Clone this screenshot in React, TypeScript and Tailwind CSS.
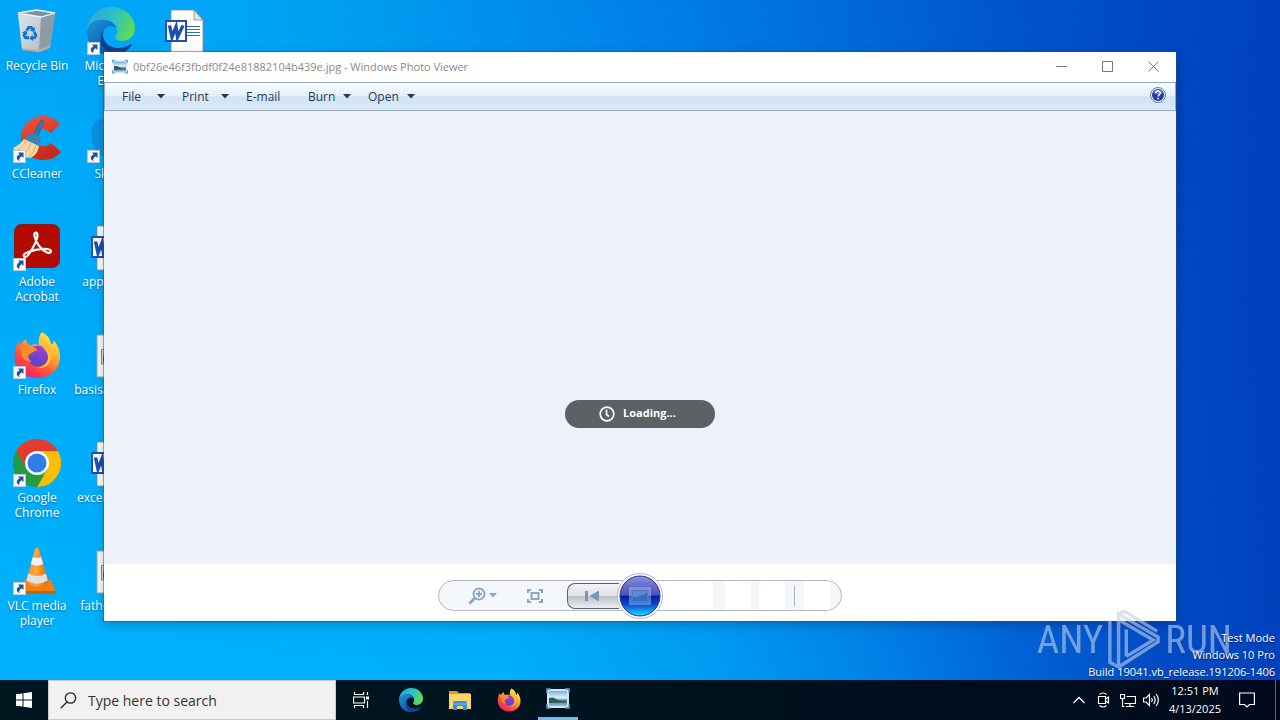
import type { ReactNode } from "react";

type IconProps = { className?: string };

const RecycleBinIcon = ({ className }: IconProps) => (
  <svg viewBox="0 0 48 48" className={className}>
    <defs>
      <linearGradient id="binFront" x1="0" y1="0" x2="1" y2="1">
        <stop offset="0" stopColor="#dde5ea" />
        <stop offset="1" stopColor="#b3bfc8" />
      </linearGradient>
    </defs>
    <path d="M5 6 L24 3 L42 6 L37 40 L26 45 L9 42Z" fill="#a9b8c3" />
    <path d="M5 6 L28 10 L26 45 L9 42Z" fill="url(#binFront)" />
    <path d="M28 10 L42 6 L37 40 L26 45Z" fill="#8d9ba6" />
    <path d="M5 6 L24 3 L42 6 L28 10Z" fill="#7d929f" stroke="#eef4f7" strokeWidth="1.3" />
    <path d="M9 41 L26 43 L37 38 L37 41 L26 45 L9 43Z" fill="#c9a99a" />
    <g fill="#1173cb">
      <path id="recycleArm" d="M12.500 22.500 L15 19 H19 L20.500 21 L22 20 L21.500 25 L16.800 23.500 L18.300 22.500 L17 21.300 L15 24.300Z" />
      <use href="#recycleArm" transform="rotate(120 17 26.500)" />
      <use href="#recycleArm" transform="rotate(240 17 26.500)" />
    </g>
  </svg>
);

const EdgeIcon = ({ className }: IconProps) => (
  <svg viewBox="0 0 48 48" className={className}>
    <defs>
      <linearGradient id="edgeTop" x1="0" y1="0.3" x2="1" y2="0.6">
        <stop offset="0" stopColor="#2aa9e0" />
        <stop offset="0.5" stopColor="#2cc0c8" />
        <stop offset="1" stopColor="#62dd4c" />
      </linearGradient>
      <linearGradient id="edgeMid" x1="0" y1="0" x2="0.6" y2="1">
        <stop offset="0" stopColor="#1c93dc" />
        <stop offset="1" stopColor="#0c59a8" />
      </linearGradient>
    </defs>
    <path d="M0 24 C0 10 11 0 24 0 C38 0 48 10 48 21 C48 29 42 34 35 34 C29 34 27 31 29 28 C32 24 30 15 20 13 C10 12 2 17 0 24Z" fill="url(#edgeTop)" />
    <path d="M0 24 C2 15 11 11 19 13 C24 14 28 17 29 21 C22 16 14 22 14 31 C14 39 19 45 27 47.8 C12 50 0 39 0 24Z" fill="url(#edgeMid)" />
    <path d="M17 22 C13 31 20 42 33 41 C38 40.500 41 39 44 37 C45 37 45 38 44 39 C40 45 33 48 27 47.800 C17 45 12 37 14 29 C14.500 26 15.500 24 17 22Z" fill="#12408c" />
  </svg>
);

const WordFileIcon = ({ className }: IconProps) => (
  <svg viewBox="0 0 48 48" className={className}>
    <path d="M10 3 H33 L42 13 V47 H10Z" fill="#fff" stroke="#8a8a8a" strokeWidth="0.8" />
    <path d="M33 3 V13 H42Z" fill="#e2e2e2" stroke="#8a8a8a" strokeWidth="0.8" />
    <path d="M26 19.500 H39 M26 22.500 H39 M26 25.500 H39 M26 28.500 H39" stroke="#2b6cc4" strokeWidth="1" />
    <path d="M5 14 H25 V34 H5Z" fill="#fff" stroke="#1c4fae" strokeWidth="2" />
    <path d="M8.500 18.500 L11 30 L15 20 L16.500 30 L22 18.500" fill="none" stroke="#1c4fae" strokeWidth="3.400" />
  </svg>
);

const PictureFileIcon = ({ className }: IconProps) => (
  <svg viewBox="0 0 48 48" className={className}>
    <path d="M10 4 H42 V46 H10Z" fill="#fafafa" stroke="#a2a2a2" strokeWidth="1" />
    <path d="M14.500 18.500 H38 V33 H14.500Z" fill="#dce8f2" stroke="#7d8894" strokeWidth="1" />
    <path d="M16 20 H37 V31.500 H16Z" fill="#9fb3c4" />
    <path d="M16 31.500 V25 L22 24 L37 31.500Z" fill="#405468" />
  </svg>
);

const CCleanerIcon = ({ className }: IconProps) => (
  <svg viewBox="0 0 48 48" className={className}>
    <defs>
      <linearGradient id="ccRed" x1="0" y1="0" x2="0.400" y2="1">
        <stop offset="0" stopColor="#f0563d" />
        <stop offset="1" stopColor="#c52a1c" />
      </linearGradient>
    </defs>
    <path d="M47 9 C42 3 36 1 30 1 C18 1 8 11 8 23 C8 36 18 45 30 45 C38 45 44 42 48 37 L38 28 C35 32 25 33 22 26 C19 19 24 14 29 14 C33 14 35 16 38 18Z" fill="url(#ccRed)" />
    <path d="M28 5 L31 6 L24 24 L19 22Z" fill="#2c7bb8" stroke="#1d5a8e" strokeWidth="0.600" />
    <path d="M15 20 C19 16 28 20 28 26 L24 31 L11 25Z" fill="#3d82b4" />
    <path d="M11 24 L26 31 C25 37 22 42 16 43 C8 41 3 37 0 33 C5 31 8 28 11 24Z" fill="#f6d9a2" />
    <path d="M13 26 C10 31 7 34 3 36 M18 28 C16 34 13 38 10 40 M23 30 C21 36 19 40 15 42" stroke="#e2b06c" strokeWidth="1" fill="none" />
  </svg>
);

const SkypeIcon = ({ className }: IconProps) => (
  <svg viewBox="0 0 48 48" className={className}>
    <circle cx="17" cy="17" r="13" fill="#0c8fe0" />
    <circle cx="31" cy="31" r="13" fill="#0a78cc" />
    <circle cx="24" cy="24" r="19" fill="#0c8fe0" />
  </svg>
);

const AcrobatIcon = ({ className }: IconProps) => (
  <svg viewBox="0 0 48 48" className={className}>
    <rect x="1.500" y="1.500" width="45" height="43" rx="7" fill="#b30b00" stroke="#8c1008" strokeWidth="0.800" />
    <path d="M11 31.500 C10 34.500 13 35.500 16 31 C20 25 24 18 24.500 12.500 C24.500 8.500 20.500 8.500 21.500 13 C23 20 28 27 34 29.500 C39 31 39.500 26.500 34 26 C27 25.500 18 28 13 30 C12 30.500 11.500 31 11 31.500Z" fill="none" stroke="#fff" strokeWidth="2.200" />
  </svg>
);

const FirefoxIcon = ({ className }: IconProps) => (
  <svg viewBox="0 0 48 48" className={className}>
    <defs>
      <linearGradient id="ffBody" x1="0.850" y1="0.050" x2="0.250" y2="0.950">
        <stop offset="0" stopColor="#fff04a" />
        <stop offset="0.350" stopColor="#ffb02e" />
        <stop offset="0.650" stopColor="#ff5b35" />
        <stop offset="1" stopColor="#ef1d6c" />
      </linearGradient>
      <linearGradient id="ffGlobe" x1="0.700" y1="0" x2="0.300" y2="1">
        <stop offset="0" stopColor="#a63ddb" />
        <stop offset="1" stopColor="#5243c8" />
      </linearGradient>
    </defs>
    <path d="M29 1 C36 5 38 10 38 13 C40 13 41 12 40.500 9 C45 14 47 20 47 26 C47 38 37 47 24.500 47 C11 47 1.500 37 1.500 25 C1.500 19 3 14 6 10 C6 12 7 13 8 14 C9 11 11 9 13 8 C13 11 15 13 17 14 C20 13 24 13 26 14 C25 10 26 4 29 1Z" fill="url(#ffBody)" />
    <circle cx="25" cy="25" r="10.500" fill="url(#ffGlobe)" />
    <path d="M8 16 C13 12 21 14 25 20 C21 19 20 22 17 23 C14 25 15 28 19 31 C13 31 9 27 8 22Z" fill="#ff8b2b" />
    <path d="M28 14 C34 16 38 21 38 28 C36 36 29 38 24 37 C31 36 36 31 35 25 C34 20 30 17 28 14Z" fill="#ffc234" />
    <path d="M3 28 C5 39 15 44 26 43 C18 42 12 39 10 32Z" fill="#ff3750" opacity="0.700" />
  </svg>
);

const ChromeIcon = ({ className }: IconProps) => (
  <svg viewBox="0 0 48 48" className={className}>
    <circle cx="24" cy="24" r="24" fill="#2da94f" />
    <path d="M24 24 V12 H44.800 A24 24 0 0 0 3.200 12 L13.600 30Z" fill="#e33b2e" />
    <path d="M24 12 H44.800 A24 24 0 0 1 24 48 L34.400 30Z" fill="#fdbd00" />
    <path d="M3.200 12 L13.600 30 L24 36 H31 L24 48 A24 24 0 0 1 3.200 12Z" fill="#259b46" />
    <circle cx="24" cy="24" r="12" fill="#fff" />
    <circle cx="24" cy="24" r="9.500" fill="#2f7de9" />
  </svg>
);

const VlcIcon = ({ className }: IconProps) => (
  <svg viewBox="0 0 48 48" className={className}>
    <defs>
      <linearGradient id="cone" x1="0" y1="0" x2="1" y2="0">
        <stop offset="0" stopColor="#f58a1f" />
        <stop offset="0.450" stopColor="#ffa63d" />
        <stop offset="1" stopColor="#e06400" />
      </linearGradient>
    </defs>
    <path d="M11 33 H38 L43 46 H5Z" fill="#f08013" />
    <path d="M5 44 H42.500 L43 47 H4.500Z" fill="#d45f00" />
    <path d="M22 2 Q24 -0.500 26 2 L35 35 C32 41 16 41 13 35Z" fill="url(#cone)" />
    <path d="M19.900 10 Q24 12 28.100 10 L30.300 17 Q24 20.500 17.700 17Z" fill="#f1f1f1" />
    <path d="M15.200 26.500 Q24 31.500 32.800 26.500 L34.800 33.500 Q24 40 13.200 33.500Z" fill="#e0e0e0" />
  </svg>
);

const ShortcutBadge = () => (
  <svg viewBox="0 0 13 13" className="absolute bottom-0 left-0 size-[13px]">
    <rect x="0.500" y="0.500" width="12" height="12" fill="#fff" stroke="#b9c7d6" />
    <path d="M5 2.500 H10.500 V8 L8.700 6.300 C6.500 7.500 6 9 6.500 11 C2.600 9.500 3 6 6.600 4.200Z" fill="#20539b" />
  </svg>
);

const PhotoViewerIcon = ({ className }: IconProps) => (
  <svg viewBox="0 0 24 24" className={className}>
    <defs>
      <linearGradient id="photoSky" x1="0" y1="0" x2="0" y2="1">
        <stop offset="0" stopColor="#6fb2e4" />
        <stop offset="0.450" stopColor="#e2f2fa" />
        <stop offset="0.650" stopColor="#4b7f8a" />
        <stop offset="1" stopColor="#8fc0e0" />
      </linearGradient>
    </defs>
    <path d="M1 2 H23 V21 H1Z" fill="#d5e6f2" />
    <path d="M3 4 H21 V19 H3Z" fill="url(#photoSky)" />
    <path d="M3 11 L7 10.500 L14 14 L21 14.500 V15.500 L3 16Z" fill="#2c5a58" />
    <path d="M1 6 V2 H5 M19 2 H23 V6 M23 17 V21 H19 M5 21 H1 V17" fill="none" stroke="#5c93c4" strokeWidth="1.600" />
  </svg>
);

const ExplorerIcon = ({ className }: IconProps) => (
  <svg viewBox="0 0 24 24" className={className}>
    <path d="M1 3 H9 L11 5 H22 V8 H1Z" fill="#dd9a1c" />
    <path d="M1 6 H23 V21 H1Z" fill="#fbd367" />
    <path d="M5 22 V15 Q5 13 7 13 H17 Q19 13 19 15 V22 H15 V18 H9 V22Z" fill="#3390d6" />
    <path d="M5 16 H19" stroke="#7cc0ee" strokeWidth="1" />
  </svg>
);

const Caret = ({ className }: IconProps) => (
  <svg viewBox="0 0 8 5" className={className}>
    <path d="M0 0 H8 L4 4.500Z" fill="currentColor" />
  </svg>
);

type Shortcut = { name: string; icon: ReactNode; linked?: boolean };

const shortcuts: Shortcut[] = [
  { name: "Recycle Bin", icon: <RecycleBinIcon className="size-12" /> },
  { name: "CCleaner", icon: <CCleanerIcon className="size-12" />, linked: true },
  { name: "Adobe Acrobat", icon: <AcrobatIcon className="size-12" />, linked: true },
  { name: "Firefox", icon: <FirefoxIcon className="size-12" />, linked: true },
  { name: "Google Chrome", icon: <ChromeIcon className="size-12" />, linked: true },
  { name: "VLC media player", icon: <VlcIcon className="size-12" />, linked: true },
  { name: "Microsoft Edge", icon: <EdgeIcon className="size-12" />, linked: true },
  { name: "Skype", icon: <SkypeIcon className="size-12" />, linked: true },
  { name: "appfive.rtf", icon: <WordFileIcon className="size-12" /> },
  { name: "basisarea.jpg", icon: <PictureFileIcon className="size-12" /> },
  { name: "excellove.rtf", icon: <WordFileIcon className="size-12" /> },
  { name: "fatherit.jpg", icon: <PictureFileIcon className="size-12" /> },
  { name: "", icon: <WordFileIcon className="size-12" /> },
];

const menus = [
  { name: "File", width: "w-[60px]", arrow: true },
  { name: "Print", width: "w-16", arrow: true },
  { name: "E-mail", width: "w-[62px]", arrow: false },
  { name: "Burn", width: "w-[60px]", arrow: true },
  { name: "Open", width: "w-16", arrow: true },
];

const DesktopIcons = () => (
  <div className="grid h-full grid-flow-col grid-rows-[repeat(6,108px)] auto-cols-[74px] justify-start">
    {shortcuts.map((item, i) => (
      <div key={i} className="flex flex-col items-center gap-[3px] pt-[7px]">
        <div className="relative">
          {item.icon}
          {item.linked && <ShortcutBadge />}
        </div>
        <span className="text-center text-[12px] leading-[15px] text-white [text-shadow:0_1px_2px_rgba(0,0,0,0.4)]">
          {item.name}
        </span>
      </div>
    ))}
  </div>
);

const TitleBar = () => (
  <div className="flex h-[30px] shrink-0 items-center bg-white pl-2">
    <PhotoViewerIcon className="size-4" />
    <h1 className="ml-[5px] flex-1 truncate text-[11px] text-[#8a8a8a]">
      0bf26e46f3fbdf0f24e81882104b439e.jpg - Windows Photo Viewer
    </h1>
    <div className="flex h-full pb-[2px] text-[#777]">
      <button aria-label="Minimize" className="grid w-[46px] place-items-center">
        <svg viewBox="0 0 11 11" className="size-[11px]"><path d="M0 5.500 H11" stroke="currentColor" /></svg>
      </button>
      <button aria-label="Maximize" className="grid w-[46px] place-items-center">
        <svg viewBox="0 0 11 11" className="size-[11px]"><path d="M0.500 0.500 H10.500 V10.500 H0.500Z" fill="none" stroke="currentColor" /></svg>
      </button>
      <button aria-label="Close" className="grid w-[46px] place-items-center">
        <svg viewBox="0 0 11 11" className="size-[11px]"><path d="M0.500 0.500 L10.500 10.500 M10.500 0.500 L0.500 10.500" stroke="currentColor" /></svg>
      </button>
    </div>
  </div>
);

const MenuBar = () => (
  <div className="flex h-[29px] shrink-0 items-stretch border border-[#93a9c6] bg-[linear-gradient(#f7fbff_0%,#e4eff9_48%,#d3e3f1_52%,#dbe9f6_100%)] pl-[7px] text-[12px] text-[#1e395b]">
    {menus.map((menu) => (
      <button key={menu.name} className={`flex items-center justify-between pr-[7px] pl-[10px] ${menu.width}`}>
        {menu.name}
        {menu.arrow && <Caret className="h-[5px] w-2" />}
      </button>
    ))}
    <button aria-label="Help" className="mr-[9px] ml-auto">
      <svg viewBox="0 0 16 16" className="mb-1 size-4">
        <circle cx="8" cy="8" r="7.500" fill="#e8edf5" stroke="#6b7ea5" />
        <circle cx="8" cy="8" r="6" fill="#1c3fa8" />
        <path d="M3 6 A5.300 5.300 0 0 1 13 6 Q8 9 3 6Z" fill="#6488d8" opacity="0.700" />
        <path d="M5.800 6.300 C5.800 3.300 10.300 3.300 10.300 6 C10.300 7.600 8.200 7.600 8.200 9.400 M8.200 10.800 V12.300" fill="none" stroke="#fff" strokeWidth="1.500" />
      </svg>
    </button>
  </div>
);

const Controls = () => (
  <div className="flex h-[57px] shrink-0 justify-center bg-white pt-4">
    <div className="relative flex h-[31px] w-[404px] items-center rounded-full border border-[#b5b6bf] bg-[#f4f7fa] text-[#8ea5c1]">
      <button aria-label="Change the display size" className="ml-[29px] flex items-center gap-[3px]">
        <svg viewBox="0 0 18 18" className="size-[18px]" fill="none" stroke="currentColor">
          <circle cx="11" cy="7" r="5.500" strokeWidth="2" />
          <path d="M7 11 L1.500 16.500" strokeWidth="3" />
          <path d="M8 7 H14 M11 4 V10" strokeWidth="2" />
        </svg>
        <Caret className="h-[5px] w-2" />
      </button>
      <button aria-label="Actual size" className="ml-[30px]">
        <svg viewBox="0 0 16 14" className="h-[14px] w-4" fill="none" stroke="currentColor" strokeWidth="2">
          <path d="M1 4 V1 H4 M12 1 H15 V4 M15 10 V13 H12 M4 13 H1 V10" />
          <path d="M4.500 4 H11.500 V10 H4.500Z" />
        </svg>
      </button>
      <button
        aria-label="Previous"
        className="ml-6 flex h-[26px] w-[52px] items-center justify-center rounded-l-lg border border-r-0 border-[#5a6270] bg-[linear-gradient(#f0f2f4_0%,#dfe2e6_48%,#bcc2ca_52%,#eceff2_100%)] pr-1 text-[#7d95b3]"
      >
        <svg viewBox="0 0 14 12" className="h-3 w-[14px]" fill="currentColor">
          <path d="M0 1 H3 V11 H0Z M14 0.500 V11.500 L4.500 6Z" />
        </svg>
      </button>
      <div className="flex h-full flex-1 items-center overflow-hidden rounded-r-full">
        <div className="h-full w-[94px] bg-white" />
        <div className="ml-[12px] h-full w-[26px] bg-white" />
        <div className="ml-[8px] h-full w-[26px] bg-white" />
        <div className="ml-[9px] h-5 w-px bg-[#a8b4c4]" />
        <div className="ml-[9px] h-full w-[26px] bg-white" />
      </div>
      <button aria-label="Play slide show" className="absolute top-1/2 left-1/2 -translate-x-1/2 -translate-y-1/2">
        <svg viewBox="0 0 46 46" className="size-[46px]">
          <defs>
            <linearGradient id="orb" x1="0" y1="0" x2="0" y2="1">
              <stop offset="0" stopColor="#9297dc" />
              <stop offset="0.200" stopColor="#6c72cc" />
              <stop offset="0.480" stopColor="#4a52bc" />
              <stop offset="0.500" stopColor="#0a189a" />
              <stop offset="0.720" stopColor="#0a4fd0" />
              <stop offset="1" stopColor="#21dcff" />
            </linearGradient>
          </defs>
          <circle cx="23" cy="23" r="22.500" fill="#fff" stroke="#b3b3c8" />
          <circle cx="23" cy="23" r="20" fill="url(#orb)" stroke="#25328f" />
          <path d="M12 14 H34 V32 H12Z" fill="#a9c6f0" opacity="0.450" />
          <path d="M15.500 17.500 H30.500 V28.500 H15.500Z" fill="#2f6fc6" stroke="#5578b6" />
          <path d="M16 24 Q22 24 30 20 V18 H16Z" fill="#5f8bd0" />
        </svg>
      </button>
    </div>
  </div>
);

const PhotoViewer = () => (
  <section className="absolute top-[52px] right-[104px] bottom-[59px] left-[104px] flex flex-col shadow-[0_0_0_1px_rgba(30,80,130,0.45),0_3px_10px_rgba(0,0,0,0.25)]">
    <TitleBar />
    <MenuBar />
    <div className="flex flex-1 items-center justify-center bg-[#edf1fa] pt-[152px]">
      <div role="status" className="flex h-7 w-[150px] items-center gap-2 rounded-full bg-[#5d6166] pl-[34px] text-[11px] font-bold text-white">
        <svg viewBox="0 0 16 16" className="size-4" fill="none" stroke="currentColor" strokeWidth="1.700">
          <circle cx="8" cy="8" r="6.800" />
          <path d="M7.500 3.500 V8.500 L10 10.500" />
        </svg>
        Loading...
      </div>
    </div>
    <Controls />
  </section>
);

const Watermark = () => (
  <>
    <div className="absolute right-[48px] bottom-[10px] flex items-center gap-1 font-['Liberation_Sans_Narrow','Roboto_Condensed','Liberation_Sans',sans-serif] text-[39px] leading-none text-[#c3d0ea] opacity-60">
      <span>ANY</span>
      <svg viewBox="0 0 56 62" className="h-[60px] w-[54px]" fill="none" stroke="currentColor" strokeWidth="3.500">
        <path d="M3 10 V54 L12 59 V15" />
        <path d="M12 18 V4 L53 28 V33 L12 59" />
        <path d="M12 10 L48 31 L20 48" />
        <path d="M12 4 L18 1 L52 22" />
        <path d="M20 48 V20" />
      </svg>
      <span>RUN</span>
    </div>
    <div className="absolute right-[5px] bottom-0 text-right text-[11px] leading-[17px] text-white [text-shadow:0_1px_1px_rgba(0,0,0,0.5)]">
      <p>Test Mode</p>
      <p>Windows 10 Pro</p>
      <p>Build 19041.vb_release.191206-1406</p>
    </div>
  </>
);

const Taskbar = () => (
  <footer className="flex h-10 shrink-0 items-stretch bg-[linear-gradient(90deg,#001722,#00131f_50%,#000a1c)] text-white">
    <button aria-label="Start" className="grid w-12 place-items-center">
      <svg viewBox="0 0 16 16" className="size-4" fill="#fff">
        <path d="M0 2.300 L6.500 1.400 V7.500 H0Z M7.500 1.200 L16 0 V7.500 H7.500Z M0 8.500 H6.500 V14.600 L0 13.700Z M7.500 8.500 H16 V16 L7.500 14.800Z" />
      </svg>
    </button>
    <label className="flex w-72 items-center gap-[11px] border border-[#c9c9c9] bg-[#f1f1f1] pl-[11px]">
      <svg viewBox="0 0 17 17" className="size-[17px]" fill="none" stroke="#222" strokeWidth="1.300">
        <circle cx="10.500" cy="6" r="5.200" />
        <path d="M7 10 L0.700 16.300" />
      </svg>
      <input type="text" aria-label="Search" placeholder="Type here to search" className="min-w-0 flex-1 bg-transparent text-[14px] outline-none placeholder:text-[#333]" />
    </label>
    <button aria-label="Task View" className="grid w-[50px] place-items-center">
      <svg viewBox="0 0 17 16" className="h-4 w-[17px]" fill="none" stroke="#fff" strokeWidth="1.200">
        <path d="M1.500 0 V2.500 H10.500 V0 M1.500 16 V13.500 H10.500 V16 M0.500 5 H11.500 V11 H0.500Z M14.500 0 V3 M14.500 9 V16" />
        <path d="M13 4.500 H16 V7.500 H13Z" fill="#fff" stroke="none" />
      </svg>
    </button>
    <button aria-label="Microsoft Edge" className="grid w-[49px] place-items-center"><EdgeIcon className="size-6" /></button>
    <button aria-label="File Explorer" className="grid w-[49px] place-items-center"><ExplorerIcon className="size-6" /></button>
    <button aria-label="Firefox" className="grid w-[49px] place-items-center"><FirefoxIcon className="size-6" /></button>
    <button aria-label="Windows Photo Viewer" className="flex w-[49px] flex-col items-center justify-between pt-[7px]">
      <PhotoViewerIcon className="size-6" />
      <span className="h-[3px] w-10 bg-[#76b9ed]" />
    </button>
    <div className="ml-auto flex items-center">
      <button aria-label="Show hidden icons" className="mr-[12px]">
        <svg viewBox="0 0 12 8" className="h-2 w-3" fill="none" stroke="#fff" strokeWidth="1.300"><path d="M0.500 7 L6 1.500 L11.500 7" /></svg>
      </button>
      <button aria-label="Meet Now" className="mr-[10px]">
        <svg viewBox="0 0 13 16" className="h-4 w-[13px]" fill="none" stroke="#fff" strokeWidth="1.200">
          <path d="M1.500 4.500 H8.500 V11.500 H1.500Z M8.500 7 L11.500 5 V11 L8.500 9 M2.500 2.500 Q6 -0.500 9.500 2.500 M2.500 13.500 Q6 16.500 9.500 13.500" />
        </svg>
      </button>
      <button aria-label="Network" className="mr-[7px]">
        <svg viewBox="0 0 16 15" className="h-[15px] w-4" fill="none" stroke="#fff" strokeWidth="1.200">
          <path d="M6.500 3.500 H15.500 V10.500 H4.500 M10 10.500 V13.500 M6 13.500 H14 M0.500 1.500 H4.500 V5.500 H0.500Z M2.500 5.500 V13.500 H4.500" />
        </svg>
      </button>
      <button aria-label="Volume" className="mr-[9px]">
        <svg viewBox="0 0 17 14" className="h-[14px] w-[17px]" fill="none" stroke="#fff" strokeWidth="1.200">
          <path d="M0.500 5 H3 L6.500 1.500 V12.500 L3 9 H0.500Z M8.500 5 Q10 7 8.500 9 M10.800 3 Q13.500 7 10.800 11 M13.200 1 Q17.500 7 13.200 13" />
        </svg>
      </button>
      <div className="mr-[18px] text-center text-[11px] leading-[18px]">
        <p>12:51 PM</p>
        <p>4/13/2025</p>
      </div>
      <button aria-label="Notifications" className="mr-5">
        <svg viewBox="0 0 16 16" className="size-4" fill="none" stroke="#fff" strokeWidth="1.200">
          <path d="M0.600 1 H15.400 V12.500 H10.500 L8 15 L5.500 12.500 H0.600Z" />
        </svg>
      </button>
      <div className="h-full w-[5px] border-l border-[#5a6270]" />
    </div>
  </footer>
);

export default function App() {
  return (
    <div className="flex h-screen flex-col overflow-hidden font-['Open_Sans','Noto_Sans',sans-serif]">
      <main className="relative isolate min-h-0 flex-1 bg-[linear-gradient(90deg,#00b2fd_0%,#00b0fb_40%,#009cf3_56%,#0084e8_68%,#0066d8_79%,#004dc6_90%,#0042bd_100%)]">
        <div className="absolute inset-0 -z-10 bg-[linear-gradient(97deg,#00a6f8_0%,#00a4f8_18%,#0096ef_31%,#0082e8_46%,#0070dd_58%,#0058cc_72%,#0047c2_86%,#003cb8_100%)] [mask-image:linear-gradient(#000,transparent)]" />
        <DesktopIcons />
        <PhotoViewer />
        <Watermark />
      </main>
      <Taskbar />
    </div>
  );
}
